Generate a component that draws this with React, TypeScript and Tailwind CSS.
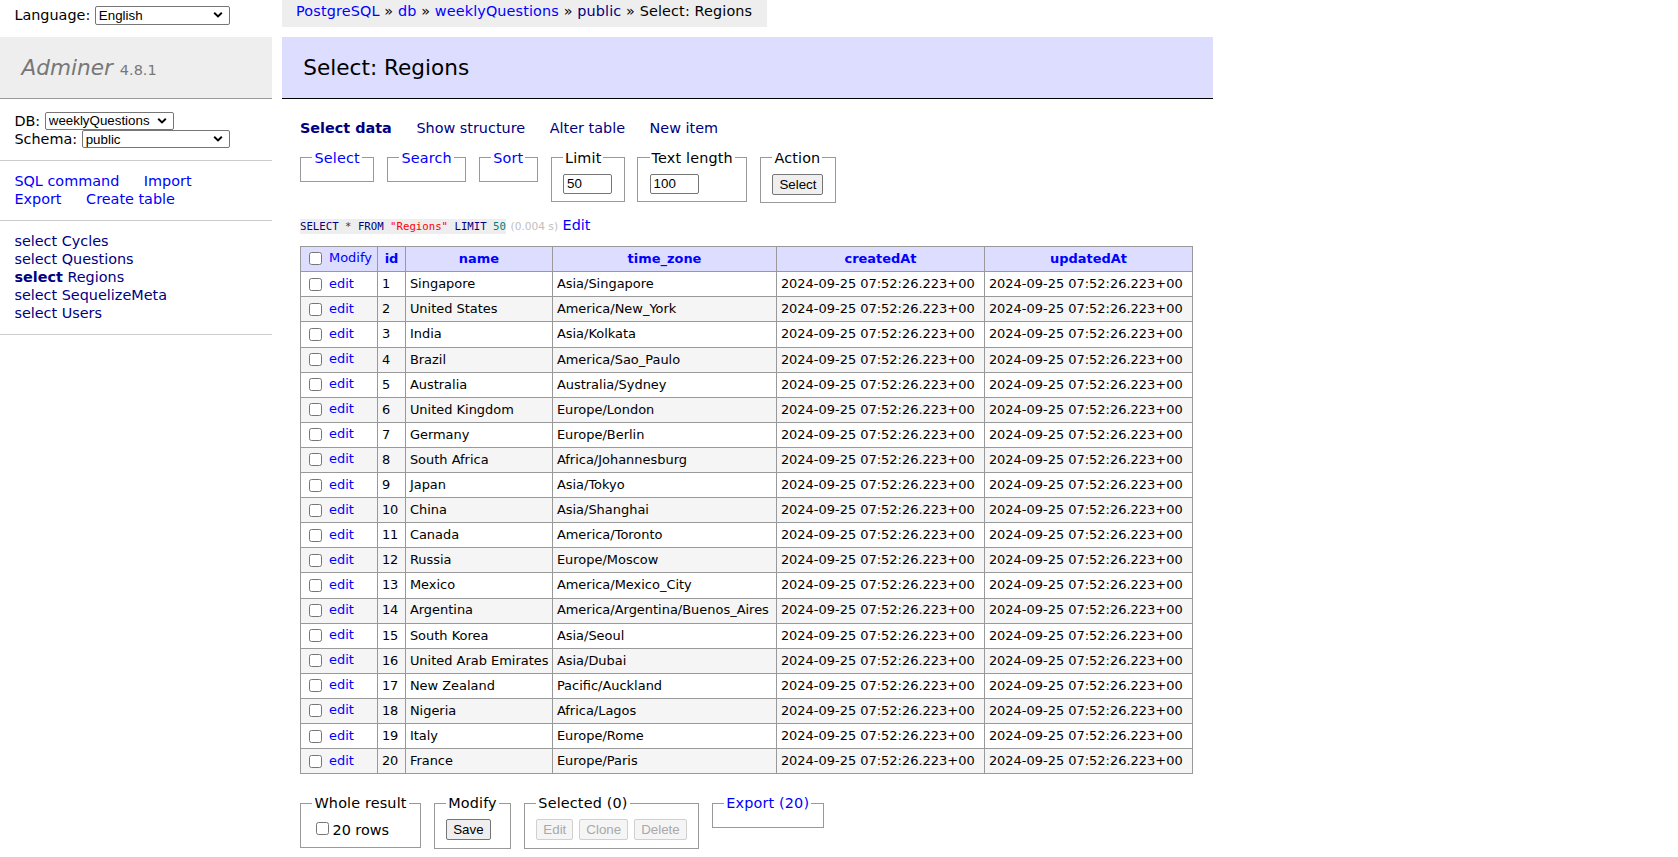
import React from "react";

const rows: [number, string, string][] = [
  [1, "Singapore", "Asia/Singapore"],
  [2, "United States", "America/New_York"],
  [3, "India", "Asia/Kolkata"],
  [4, "Brazil", "America/Sao_Paulo"],
  [5, "Australia", "Australia/Sydney"],
  [6, "United Kingdom", "Europe/London"],
  [7, "Germany", "Europe/Berlin"],
  [8, "South Africa", "Africa/Johannesburg"],
  [9, "Japan", "Asia/Tokyo"],
  [10, "China", "Asia/Shanghai"],
  [11, "Canada", "America/Toronto"],
  [12, "Russia", "Europe/Moscow"],
  [13, "Mexico", "America/Mexico_City"],
  [14, "Argentina", "America/Argentina/Buenos_Aires"],
  [15, "South Korea", "Asia/Seoul"],
  [16, "United Arab Emirates", "Asia/Dubai"],
  [17, "New Zealand", "Pacific/Auckland"],
  [18, "Nigeria", "Africa/Lagos"],
  [19, "Italy", "Europe/Rome"],
  [20, "France", "Europe/Paris"],
];

const TS = "2024-09-25 07:52:26.223+00";

function Sel({ value, className }: { value: string; className: string }) {
  return (
    <span className="relative inline-block">
      <select
        defaultValue={value}
        className={
          "block appearance-none border border-[#767676] rounded-[2px] bg-white pl-[3px] pr-[20px] text-[13.33px] leading-[15px] text-black font-['Liberation_Sans',Arial,sans-serif] " +
          className
        }
      >
        <option value={value}>{value}</option>
      </select>
      <svg
        width="10"
        height="7"
        viewBox="0 0 10 7"
        className="pointer-events-none absolute right-[7px] top-1/2 -translate-y-1/2"
      >
        <path d="M1.2 1.3 L5 5 L8.8 1.3" fill="none" stroke="#000" strokeWidth="1.9" />
      </svg>
    </span>
  );
}

function FS({
  legend,
  children,
}: {
  legend: React.ReactNode;
  children?: React.ReactNode;
}) {
  return (
    <fieldset className="shrink-0 border border-[#999] px-[11.5px] py-[7.2px]">
      <legend className="px-[2px] leading-[18px] tracking-[0.15px]">{legend}</legend>
      {children}
    </fieldset>
  );
}

function Btn({ children, disabled }: { children: React.ReactNode; disabled?: boolean }) {
  return (
    <button
      disabled={disabled}
      className={
        disabled
          ? "h-[21px] px-[6px] border border-[#d0d0d0] rounded-[2px] bg-[#f5f5f5] text-[#a9a9a9] text-[13.33px] leading-[15px] font-['Liberation_Sans',Arial,sans-serif]"
          : "h-[21px] px-[6px] border border-[#767676] rounded-[2px] bg-[#efefef] text-black text-[13.33px] leading-[15px] font-['Liberation_Sans',Arial,sans-serif]"
      }
    >
      {children}
    </button>
  );
}

function TextInput({ value }: { value: string }) {
  return (
    <div className="w-[49px] h-[20px]">
      <input
        readOnly
        value={value}
        className="block w-[49px] h-[20px] border border-[#767676] rounded-[2px] px-[3px] bg-white text-black text-[13.33px] font-['Liberation_Sans',Arial,sans-serif]"
      />
    </div>
  );
}

const cb = "m-[3px_3px_3px_4px]";
const cbt = "m-[3px_3px_3px_4px] align-middle";
const tdc = "border border-[#999] px-[3.9px] py-0 h-[25.1px] whitespace-nowrap align-middle";

export default function App() {
  return (
    <div className="min-h-screen bg-white text-black text-[14.4px] leading-[1.25] font-['DejaVu_Sans',Verdana,sans-serif]">
      {/* top row */}
      <div className="flex h-[36.7px]">
        <div className="w-[281.7px] shrink-0 pl-[14.4px] pt-[5.7px]">
          <div className="flex items-center gap-[4.6px]">
            <span>Language:</span>
            <Sel value="English" className="w-[135px] h-[19px]" />
          </div>
        </div>
        <div className="h-[26.7px] bg-[#eee] px-[14.4px] leading-[23px] whitespace-nowrap tracking-[0.13px]">
          <a className="text-[#0000ff]">PostgreSQL</a> » <a className="text-[#0000ff]">db</a> »{" "}
          <a className="text-[#0000ff]">weeklyQuestions</a> » <a className="text-[#000080]">public</a> »
          Select: Regions
        </div>
      </div>

      <div className="flex items-start">
        {/* sidebar */}
        <aside className="w-[272px] shrink-0">
          <h1 className="bg-[#eee] border-b border-[#999] px-[21.6px] py-[17.28px] text-[21.6px] leading-[27px] text-[#777]">
            <a className="italic">Adminer</a>{" "}
            <span className="text-[14.47px] leading-none">4.8.1</span>
          </h1>
          <div className="px-[14.4px] pt-[11.5px] pb-[11.5px] border-b border-[#ccc]">
            <div className="flex items-center gap-[4.6px] h-[19.7px]">
              <span>DB:</span>
              <Sel value="weeklyQuestions" className="w-[129px] h-[18px]" />
            </div>
            <div className="flex items-center gap-[4.6px] h-[18px]">
              <span>Schema:</span>
              <Sel value="public" className="w-[148px] h-[18px]" />
            </div>
          </div>
          <div className="px-[14.4px] py-[11.5px] border-b border-[#ccc] leading-[18px]">
            <div className="whitespace-nowrap">
              <a className="text-[#0000ff] mr-[20px]">SQL command</a> <a className="text-[#0000ff]">Import</a>
            </div>
            <div className="whitespace-nowrap">
              <a className="text-[#0000ff] mr-[20px]">Export</a> <a className="text-[#0000ff]">Create table</a>
            </div>
          </div>
          <div className="px-[14.4px] py-[11.5px] border-b border-[#ccc] leading-[18px] text-[#000080]">
            <div>
              <a>select</a> <a>Cycles</a>
            </div>
            <div>
              <a>select</a> <a>Questions</a>
            </div>
            <div>
              <a className="font-bold">select</a> <a>Regions</a>
            </div>
            <div>
              <a>select</a> <a>SequelizeMeta</a>
            </div>
            <div>
              <a>select</a> <a>Users</a>
            </div>
          </div>
        </aside>

        {/* content */}
        <main className="ml-[9.7px]">
          <h2 className="bg-[#ddf] border-b border-black px-[21.6px] py-[17.28px] text-[21.6px] leading-[27px] text-black">
            Select: Regions
          </h2>
          <div className="pl-[18.3px] pr-[20px] pt-[20px]">
            <p className="leading-[18px] text-[#000080] whitespace-nowrap">
              <a className="font-bold mr-[20px]">Select data</a> <a className="mr-[20px]">Show structure</a>{" "}
              <a className="mr-[20px]">Alter table</a> <a className="mr-[20px]">New item</a>
            </p>

            <div className="flex items-start gap-[12.6px] mt-[11.5px]">
              <FS legend={<a className="text-[#0000ff]">Select</a>} />
              <FS legend={<a className="text-[#0000ff]">Search</a>} />
              <FS legend={<a className="text-[#0000ff]">Sort</a>} />
              <FS legend="Limit">
                <TextInput value="50" />
              </FS>
              <FS legend="Text length">
                <TextInput value="100" />
              </FS>
              <FS legend="Action">
                <Btn>Select</Btn>
              </FS>
            </div>

            <p className="mt-[12.5px] leading-[18px] whitespace-nowrap">
              <code className="bg-[#eee] py-[1px] text-[10.7px] font-['DejaVu_Sans_Mono',monospace]">
                <span className="text-[#000080]">SELECT</span> <span className="text-[#553300]">*</span>{" "}
                <span className="text-[#000080]">FROM</span> <span className="text-[#ff0000]">"Regions"</span>{" "}
                <span className="text-[#000080]">LIMIT</span> <span className="text-[#007f7f]">50</span>
              </code>{" "}
              <span className="text-[#c0c0c0] text-[10.6px]">(0.004 s)</span>{" "}
              <a className="text-[#0000ff]">Edit</a>
            </p>

            <table className="mt-[10px] border-collapse table-fixed w-[892px] text-[12.96px] leading-[1.25]">
              <colgroup>
                <col className="w-[77px]" />
                <col className="w-[28px]" />
                <col className="w-[147px]" />
                <col className="w-[224px]" />
                <col className="w-[208px]" />
                <col className="w-[208px]" />
              </colgroup>
              <thead>
                <tr className="bg-[#ddf]">
                  <td className="border border-[#999] px-[3.9px] py-0 h-[25.7px] whitespace-nowrap align-middle">
                    <input type="checkbox" className={cbt} /> <a className="text-[#0000ff]">Modify</a>
                  </td>
                  {["id", "name", "time_zone", "createdAt", "updatedAt"].map((h) => (
                    <th
                      key={h}
                      className="border border-[#999] px-[6.5px] py-0 h-[25.7px] text-center font-bold whitespace-nowrap align-middle"
                    >
                      <a className="text-[#0000ff]">{h}</a>
                    </th>
                  ))}
                </tr>
              </thead>
              <tbody>
                {rows.map(([id, name, tz], i) => (
                  <tr key={id} className={i % 2 === 1 ? "bg-[#f5f5f5]" : "bg-white"}>
                    <td className={tdc}>
                      <input type="checkbox" className={cbt} /> <a className="text-[#0000ff]">edit</a>
                    </td>
                    <td className={tdc}>{id}</td>
                    <td className={tdc}>{name}</td>
                    <td className={tdc}>{tz}</td>
                    <td className={tdc}>{TS}</td>
                    <td className={tdc}>{TS}</td>
                  </tr>
                ))}
              </tbody>
            </table>

            <div className="pt-[20px] pb-[8px] flex items-start gap-[12.6px]">
              <FS legend="Whole result">
                <label className="whitespace-nowrap">
                  <input type="checkbox" className={cb} />
                  20 rows
                </label>
              </FS>
              <FS legend="Modify">
                <Btn>Save</Btn>
              </FS>
              <FS legend="Selected (0)">
                <span className="inline-flex gap-[6px]">
                  <Btn disabled>Edit</Btn>
                  <Btn disabled>Clone</Btn>
                  <Btn disabled>Delete</Btn>
                </span>
              </FS>
              <FS legend={<a className="text-[#0000ff]">Export (20)</a>} />
            </div>
          </div>
        </main>
      </div>
    </div>
  );
}
